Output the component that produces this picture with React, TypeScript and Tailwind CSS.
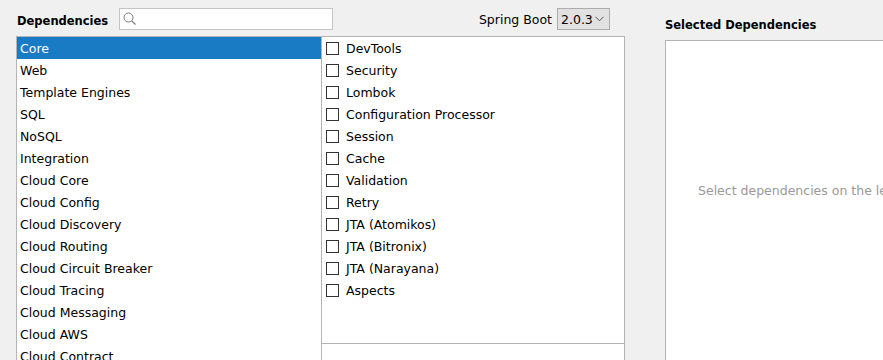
import React from "react";

const groups = [
  "Core",
  "Web",
  "Template Engines",
  "SQL",
  "NoSQL",
  "Integration",
  "Cloud Core",
  "Cloud Config",
  "Cloud Discovery",
  "Cloud Routing",
  "Cloud Circuit Breaker",
  "Cloud Tracing",
  "Cloud Messaging",
  "Cloud AWS",
  "Cloud Contract",
];

const deps = [
  "DevTools",
  "Security",
  "Lombok",
  "Configuration Processor",
  "Session",
  "Cache",
  "Validation",
  "Retry",
  "JTA (Atomikos)",
  "JTA (Bitronix)",
  "JTA (Narayana)",
  "Aspects",
];

function SearchIcon() {
  return (
    <svg width="14" height="14" viewBox="0 0 14 14" fill="none">
      <circle cx="5.5" cy="5.5" r="4.5" stroke="#7a7a7a" strokeWidth="1" />
      <path d="M8.8 8.8 L12.5 12.5" stroke="#7a7a7a" strokeWidth="1.2" />
    </svg>
  );
}

export default function App() {
  return (
    <div
      className="flex h-[360px] w-[883px] overflow-hidden bg-[#f0f0f0] text-[12.5px] text-black"
      style={{ fontFamily: '"DejaVu Sans", Verdana, sans-serif' }}
    >
      <div className="ml-[16px] flex w-[609px] shrink-0 flex-col">
        <div className="flex h-[36px] items-start pt-[8px]">
          <span className="mt-[5px] w-[103px] pl-[1px] text-[11.5px] font-bold">Dependencies</span>
          <div className="flex h-[22px] w-[214px] items-center border border-[#c4c4c4] bg-white pl-[3px]">
            <SearchIcon />
          </div>
          <div className="ml-auto mr-[15px] flex items-center">
            <span className="mt-[3px] mr-[5px]">Spring Boot</span>
            <div className="flex h-[22px] w-[53px] items-center border border-[#adadad] bg-[#e1e1e1] pl-[3px]">
              <span className="pt-[2px]">2.0.3</span>
              <svg className="ml-[2px]" width="9" height="6" viewBox="0 0 9 6" fill="none">
                <path d="M0.5 0.8 L4.5 4.8 L8.5 0.8" stroke="#555" strokeWidth="1" />
              </svg>
            </div>
          </div>
        </div>
        <div className="flex min-h-0 flex-1">
          <div className="w-[305px] shrink-0 border-l border-t border-[#b4b4b4] bg-white">
            {groups.map((g, i) => (
              <div
                key={g}
                className={
                  i === 0
                    ? "flex h-[22px] items-center bg-[#1a7bc5] pl-[3px] pt-[2px] text-white"
                    : "flex h-[22px] items-center pl-[3px] pt-[2px]"
                }
              >
                {g}
              </div>
            ))}
          </div>
          <div className="flex w-[304px] shrink-0 flex-col border-x border-[#b4b4b4]">
            <div className="h-[308px] shrink-0 border-y border-[#b4b4b4] bg-white">
              {deps.map((d) => (
                <div key={d} className="flex h-[22px] items-center pl-[4px]">
                  <span className="mr-[7px] h-[13px] w-[13px] border border-[#333] bg-white" />
                  <span className="pt-[2px]">{d}</span>
                </div>
              ))}
            </div>
            <div className="flex-1 bg-white" />
          </div>
        </div>
      </div>
      <div className="ml-[40px] flex flex-1 flex-col">
        <div className="h-[40px] pt-[17px] text-[11.5px] font-bold">Selected Dependencies</div>
        <div className="flex-1 border-l border-t border-[#b4b4b4] bg-white pl-[32px] pt-[141px] whitespace-nowrap text-[#999]">
          Select dependencies on the left
        </div>
      </div>
    </div>
  );
}
